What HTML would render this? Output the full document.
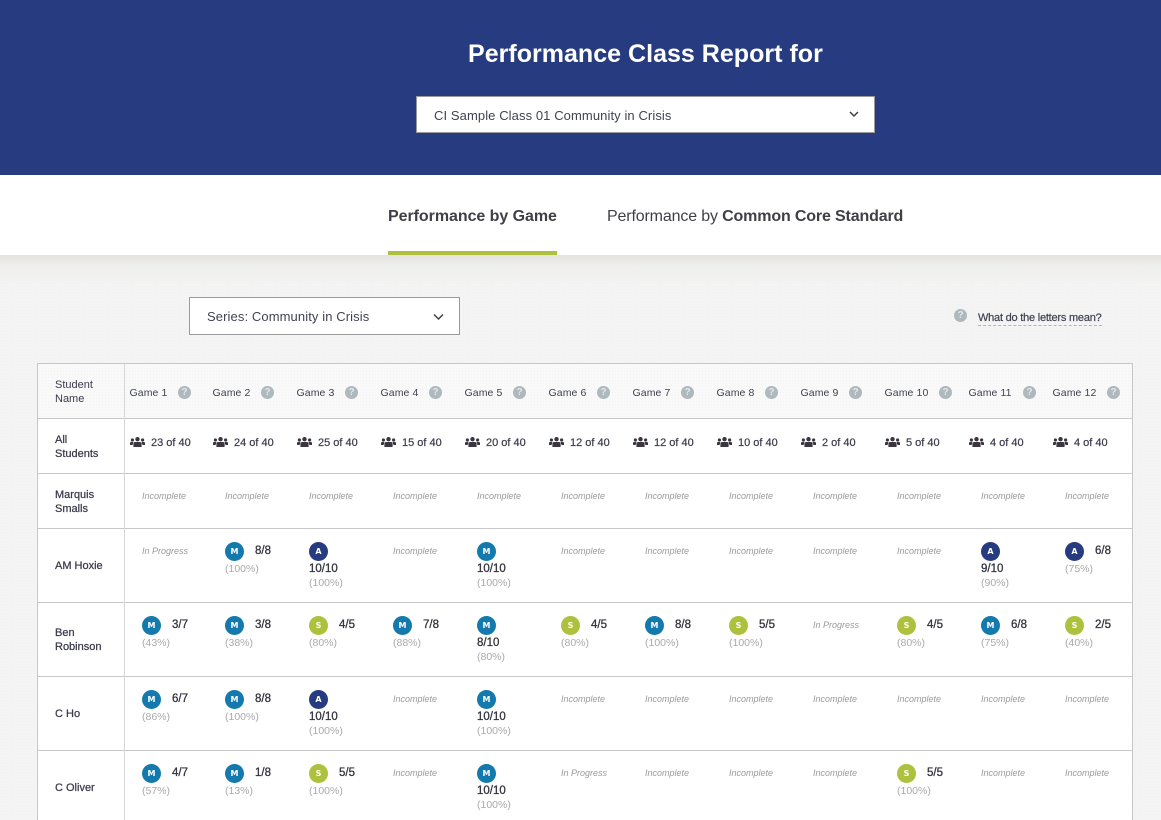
<!DOCTYPE html>
<html><head><meta charset="utf-8"><title>Performance Class Report</title>
<style>
*{box-sizing:border-box}
html,body{margin:0;padding:0;width:1161px;height:820px;overflow:hidden}
body{position:relative;background:#f4f4f4;font-family:"Liberation Sans",sans-serif;color:#3a3a4a}
#wrap{position:absolute;left:0;top:0;width:1161px;height:820px;overflow:hidden;background-color:#f4f4f4;background-image:radial-gradient(#f0f0f0 .7px,transparent .8px);background-size:3px 3px}
.a{position:absolute;white-space:nowrap}
#hd{left:0;top:0;width:1161px;height:175px;background:#273c80}
#tb{left:0;top:175px;width:1161px;height:80px;background:#fff}
#gr{left:0;top:255px;width:1161px;height:30px;background:linear-gradient(#e3e2de,rgba(238,238,236,.9) 35%,rgba(244,244,244,0))}
h1{margin:0;position:absolute;left:468px;top:39px;font-size:25px;line-height:30px;font-weight:700;color:#fff;white-space:nowrap;letter-spacing:.02px}
.sel{position:absolute;background:#fff;border:1px solid #9a9a9a;font-size:13px;color:#404452;line-height:37px;padding-left:17px;letter-spacing:.09px}
.sel svg{position:absolute}
.tab{position:absolute;top:206px;font-size:16px;line-height:20px;white-space:nowrap;color:#3f3f46}
#tbl{left:37px;top:363px;width:1096px;height:470px;background:#fff;border:1px solid #c6c6c6}
#th{left:38px;top:364px;width:1094px;height:54px;background-color:#f9f9f9;background-image:radial-gradient(#f3f3f3 .7px,transparent .8px);background-size:3px 3px}
.hl{position:absolute;left:37px;width:1096px;height:1px;background:#c8c8c8}
#vl{left:124px;top:364px;width:1px;height:456px;background:#d6d6d6}
.n{position:absolute;left:55px;font-size:11px;line-height:14px;color:#3a3a4a;-webkit-text-stroke:.25px #3a3a4a;white-space:nowrap}
.n.h{-webkit-text-stroke:0}
.g{position:absolute;top:386px;font-size:10.5px;line-height:14px;color:#3f4250;white-space:nowrap;letter-spacing:.1px}
.q{position:absolute;width:13px;height:13px;border-radius:50%;background:#aeb8bd;color:#e4e8ea;font-size:10px;font-weight:700;line-height:13px;text-align:center}
.t{position:absolute;top:436px;font-size:11px;line-height:14px;color:#3a3a4a;-webkit-text-stroke:.2px #3a3a4a;white-space:nowrap}
.pi{position:absolute;top:437px}
.r{position:absolute;left:0;width:1161px;height:74px}
.c{position:absolute;top:0;width:80px;height:74px}
.i{position:absolute;left:0;top:16px;font-size:9px;line-height:14px;font-style:italic;color:#9a9a9a;white-space:nowrap}
.b{position:absolute;left:0;top:14px;width:19px;height:19px;border-radius:50%;color:#fff;font-family:"DejaVu Sans",sans-serif;font-size:8px;font-weight:700;line-height:19px;text-align:center}
.m{background:#1479ad}.v{background:#273c80}.s{background:#aec13c}
.f{position:absolute;left:30px;top:16px;font-size:11.5px;line-height:14px;color:#34343f;-webkit-text-stroke:.3px #34343f;white-space:nowrap}
.p{position:absolute;left:0;top:34px;font-size:10.5px;line-height:14px;color:#a9a9a9;white-space:nowrap}
.w .f{left:0;top:34px}
.w .p{top:48px}
</style></head><body><div id="wrap">
<div class="a" id="hd"></div>
<div class="a" id="tb"></div>
<div class="a" id="gr"></div>
<h1>Performance Class Report for</h1>
<div class="sel" style="left:416px;top:96px;width:459px;height:37px">CI Sample Class 01 Community in Crisis
<svg style="left:432px;top:13px" width="10" height="8" viewBox="0 0 10 8"><path d="M1 2 5 6 9 2" fill="none" stroke="#3f3f46" stroke-width="1.5"/></svg></div>
<div class="tab" style="left:388px;top:207px;font-weight:700;letter-spacing:-.05px">Performance by Game</div>
<div class="tab" style="left:607px;top:207px;letter-spacing:-.15px">Performance by <b>Common Core Standard</b></div>
<div class="a" style="left:388px;top:251px;width:169px;height:4px;background:#afc13c"></div>
<div class="sel" style="left:189px;top:297px;width:271px;height:38px;line-height:38px;letter-spacing:.1px">Series: Community in Crisis
<svg style="left:243px;top:15px" width="11" height="8" viewBox="0 0 11 8"><path d="M1 1.5 5.5 6 10 1.5" fill="none" stroke="#3f3f46" stroke-width="1.5"/></svg></div>
<div class="q" style="left:954px;top:309px">?</div>
<div class="a" style="left:978px;top:312px;font-size:11px;line-height:13px;color:#3f4250;-webkit-text-stroke:.2px #3f4250;letter-spacing:-.22px;border-bottom:1px dashed #b5b5b5;height:14px;width:124px">What do the letters mean?</div>

<div class="a" id="tbl"></div>
<div class="a" id="th"></div>
<div class="hl" style="top:418px"></div>
<div class="hl" style="top:473px"></div>
<div class="hl" style="top:528px"></div>
<div class="hl" style="top:602px"></div>
<div class="hl" style="top:676px"></div>
<div class="hl" style="top:750px"></div>
<div class="a" id="vl"></div>

<div class="n h" style="top:378px">Student<br>Name</div>
<div class="n" style="top:433px">All<br>Students</div>
<div class="n" style="top:488px">Marquis<br>Smalls</div>
<div class="n" style="top:559px">AM Hoxie</div>
<div class="n" style="top:626px">Ben<br>Robinson</div>
<div class="n" style="top:707px">C Ho</div>
<div class="n" style="top:781px">C Oliver</div>

<div class="g" style="left:129.5px">Game 1</div><div class="q" style="left:178px;top:386px">?</div>
<div class="g" style="left:212.5px">Game 2</div><div class="q" style="left:261px;top:386px">?</div>
<div class="g" style="left:296.5px">Game 3</div><div class="q" style="left:345px;top:386px">?</div>
<div class="g" style="left:380.5px">Game 4</div><div class="q" style="left:429px;top:386px">?</div>
<div class="g" style="left:464.5px">Game 5</div><div class="q" style="left:513px;top:386px">?</div>
<div class="g" style="left:548.5px">Game 6</div><div class="q" style="left:597px;top:386px">?</div>
<div class="g" style="left:632.5px">Game 7</div><div class="q" style="left:681px;top:386px">?</div>
<div class="g" style="left:716.5px">Game 8</div><div class="q" style="left:765px;top:386px">?</div>
<div class="g" style="left:800.5px">Game 9</div><div class="q" style="left:849px;top:386px">?</div>
<div class="g" style="left:884.5px">Game 10</div><div class="q" style="left:939px;top:386px">?</div>
<div class="g" style="left:968.5px">Game 11</div><div class="q" style="left:1023px;top:386px">?</div>
<div class="g" style="left:1052.5px">Game 12</div><div class="q" style="left:1107px;top:386px">?</div>

<svg width="0" height="0" style="position:absolute"><defs><g id="pp" fill="#3a353f"><circle cx="7.5" cy="2.2" r="2.2"/><circle cx="2.4" cy="3" r="1.6"/><circle cx="12.6" cy="3" r="1.6"/><path d="M3.4 10V7Q3.4 5 5.4 5H9.6Q11.6 5 11.6 7V10Z"/><path d="M0 8V6.2Q0 5 1.3 5H3.4L2.6 8Z"/><path d="M15 8V6.2Q15 5 13.7 5H11.6L12.4 8Z"/></g></defs></svg>
<svg class="pi" style="left:130px" width="15" height="10"><use href="#pp"/></svg><div class="t" style="left:151px">23 of 40</div>
<svg class="pi" style="left:213px" width="15" height="10"><use href="#pp"/></svg><div class="t" style="left:234px">24 of 40</div>
<svg class="pi" style="left:297px" width="15" height="10"><use href="#pp"/></svg><div class="t" style="left:318px">25 of 40</div>
<svg class="pi" style="left:381px" width="15" height="10"><use href="#pp"/></svg><div class="t" style="left:402px">15 of 40</div>
<svg class="pi" style="left:465px" width="15" height="10"><use href="#pp"/></svg><div class="t" style="left:486px">20 of 40</div>
<svg class="pi" style="left:549px" width="15" height="10"><use href="#pp"/></svg><div class="t" style="left:570px">12 of 40</div>
<svg class="pi" style="left:633px" width="15" height="10"><use href="#pp"/></svg><div class="t" style="left:654px">12 of 40</div>
<svg class="pi" style="left:717px" width="15" height="10"><use href="#pp"/></svg><div class="t" style="left:738px">10 of 40</div>
<svg class="pi" style="left:801px" width="15" height="10"><use href="#pp"/></svg><div class="t" style="left:822px">2 of 40</div>
<svg class="pi" style="left:885px" width="15" height="10"><use href="#pp"/></svg><div class="t" style="left:906px">5 of 40</div>
<svg class="pi" style="left:969px" width="15" height="10"><use href="#pp"/></svg><div class="t" style="left:990px">4 of 40</div>
<svg class="pi" style="left:1053px" width="15" height="10"><use href="#pp"/></svg><div class="t" style="left:1074px">4 of 40</div>

<div class="r" style="top:473px">
<div class="c" style="left:142px"><div class="i">Incomplete</div></div>
<div class="c" style="left:225px"><div class="i">Incomplete</div></div>
<div class="c" style="left:309px"><div class="i">Incomplete</div></div>
<div class="c" style="left:393px"><div class="i">Incomplete</div></div>
<div class="c" style="left:477px"><div class="i">Incomplete</div></div>
<div class="c" style="left:561px"><div class="i">Incomplete</div></div>
<div class="c" style="left:645px"><div class="i">Incomplete</div></div>
<div class="c" style="left:729px"><div class="i">Incomplete</div></div>
<div class="c" style="left:813px"><div class="i">Incomplete</div></div>
<div class="c" style="left:897px"><div class="i">Incomplete</div></div>
<div class="c" style="left:981px"><div class="i">Incomplete</div></div>
<div class="c" style="left:1065px"><div class="i">Incomplete</div></div>
</div>

<div class="r" style="top:528px">
<div class="c" style="left:142px"><div class="i">In Progress</div></div>
<div class="c" style="left:225px"><div class="b m">M</div><div class="f">8/8</div><div class="p">(100%)</div></div>
<div class="c w" style="left:309px"><div class="b v">A</div><div class="f">10/10</div><div class="p">(100%)</div></div>
<div class="c" style="left:393px"><div class="i">Incomplete</div></div>
<div class="c w" style="left:477px"><div class="b m">M</div><div class="f">10/10</div><div class="p">(100%)</div></div>
<div class="c" style="left:561px"><div class="i">Incomplete</div></div>
<div class="c" style="left:645px"><div class="i">Incomplete</div></div>
<div class="c" style="left:729px"><div class="i">Incomplete</div></div>
<div class="c" style="left:813px"><div class="i">Incomplete</div></div>
<div class="c" style="left:897px"><div class="i">Incomplete</div></div>
<div class="c w" style="left:981px"><div class="b v">A</div><div class="f">9/10</div><div class="p">(90%)</div></div>
<div class="c" style="left:1065px"><div class="b v">A</div><div class="f">6/8</div><div class="p">(75%)</div></div>
</div>

<div class="r" style="top:602px">
<div class="c" style="left:142px"><div class="b m">M</div><div class="f">3/7</div><div class="p">(43%)</div></div>
<div class="c" style="left:225px"><div class="b m">M</div><div class="f">3/8</div><div class="p">(38%)</div></div>
<div class="c" style="left:309px"><div class="b s">S</div><div class="f">4/5</div><div class="p">(80%)</div></div>
<div class="c" style="left:393px"><div class="b m">M</div><div class="f">7/8</div><div class="p">(88%)</div></div>
<div class="c w" style="left:477px"><div class="b m">M</div><div class="f">8/10</div><div class="p">(80%)</div></div>
<div class="c" style="left:561px"><div class="b s">S</div><div class="f">4/5</div><div class="p">(80%)</div></div>
<div class="c" style="left:645px"><div class="b m">M</div><div class="f">8/8</div><div class="p">(100%)</div></div>
<div class="c" style="left:729px"><div class="b s">S</div><div class="f">5/5</div><div class="p">(100%)</div></div>
<div class="c" style="left:813px"><div class="i">In Progress</div></div>
<div class="c" style="left:897px"><div class="b s">S</div><div class="f">4/5</div><div class="p">(80%)</div></div>
<div class="c" style="left:981px"><div class="b m">M</div><div class="f">6/8</div><div class="p">(75%)</div></div>
<div class="c" style="left:1065px"><div class="b s">S</div><div class="f">2/5</div><div class="p">(40%)</div></div>
</div>

<div class="r" style="top:676px">
<div class="c" style="left:142px"><div class="b m">M</div><div class="f">6/7</div><div class="p">(86%)</div></div>
<div class="c" style="left:225px"><div class="b m">M</div><div class="f">8/8</div><div class="p">(100%)</div></div>
<div class="c w" style="left:309px"><div class="b v">A</div><div class="f">10/10</div><div class="p">(100%)</div></div>
<div class="c" style="left:393px"><div class="i">Incomplete</div></div>
<div class="c w" style="left:477px"><div class="b m">M</div><div class="f">10/10</div><div class="p">(100%)</div></div>
<div class="c" style="left:561px"><div class="i">Incomplete</div></div>
<div class="c" style="left:645px"><div class="i">Incomplete</div></div>
<div class="c" style="left:729px"><div class="i">Incomplete</div></div>
<div class="c" style="left:813px"><div class="i">Incomplete</div></div>
<div class="c" style="left:897px"><div class="i">Incomplete</div></div>
<div class="c" style="left:981px"><div class="i">Incomplete</div></div>
<div class="c" style="left:1065px"><div class="i">Incomplete</div></div>
</div>

<div class="r" style="top:750px">
<div class="c" style="left:142px"><div class="b m">M</div><div class="f">4/7</div><div class="p">(57%)</div></div>
<div class="c" style="left:225px"><div class="b m">M</div><div class="f">1/8</div><div class="p">(13%)</div></div>
<div class="c" style="left:309px"><div class="b s">S</div><div class="f">5/5</div><div class="p">(100%)</div></div>
<div class="c" style="left:393px"><div class="i">Incomplete</div></div>
<div class="c w" style="left:477px"><div class="b m">M</div><div class="f">10/10</div><div class="p">(100%)</div></div>
<div class="c" style="left:561px"><div class="i">In Progress</div></div>
<div class="c" style="left:645px"><div class="i">Incomplete</div></div>
<div class="c" style="left:729px"><div class="i">Incomplete</div></div>
<div class="c" style="left:813px"><div class="i">Incomplete</div></div>
<div class="c" style="left:897px"><div class="b s">S</div><div class="f">5/5</div><div class="p">(100%)</div></div>
<div class="c" style="left:981px"><div class="i">Incomplete</div></div>
<div class="c" style="left:1065px"><div class="i">Incomplete</div></div>
</div>
</div></body></html>
